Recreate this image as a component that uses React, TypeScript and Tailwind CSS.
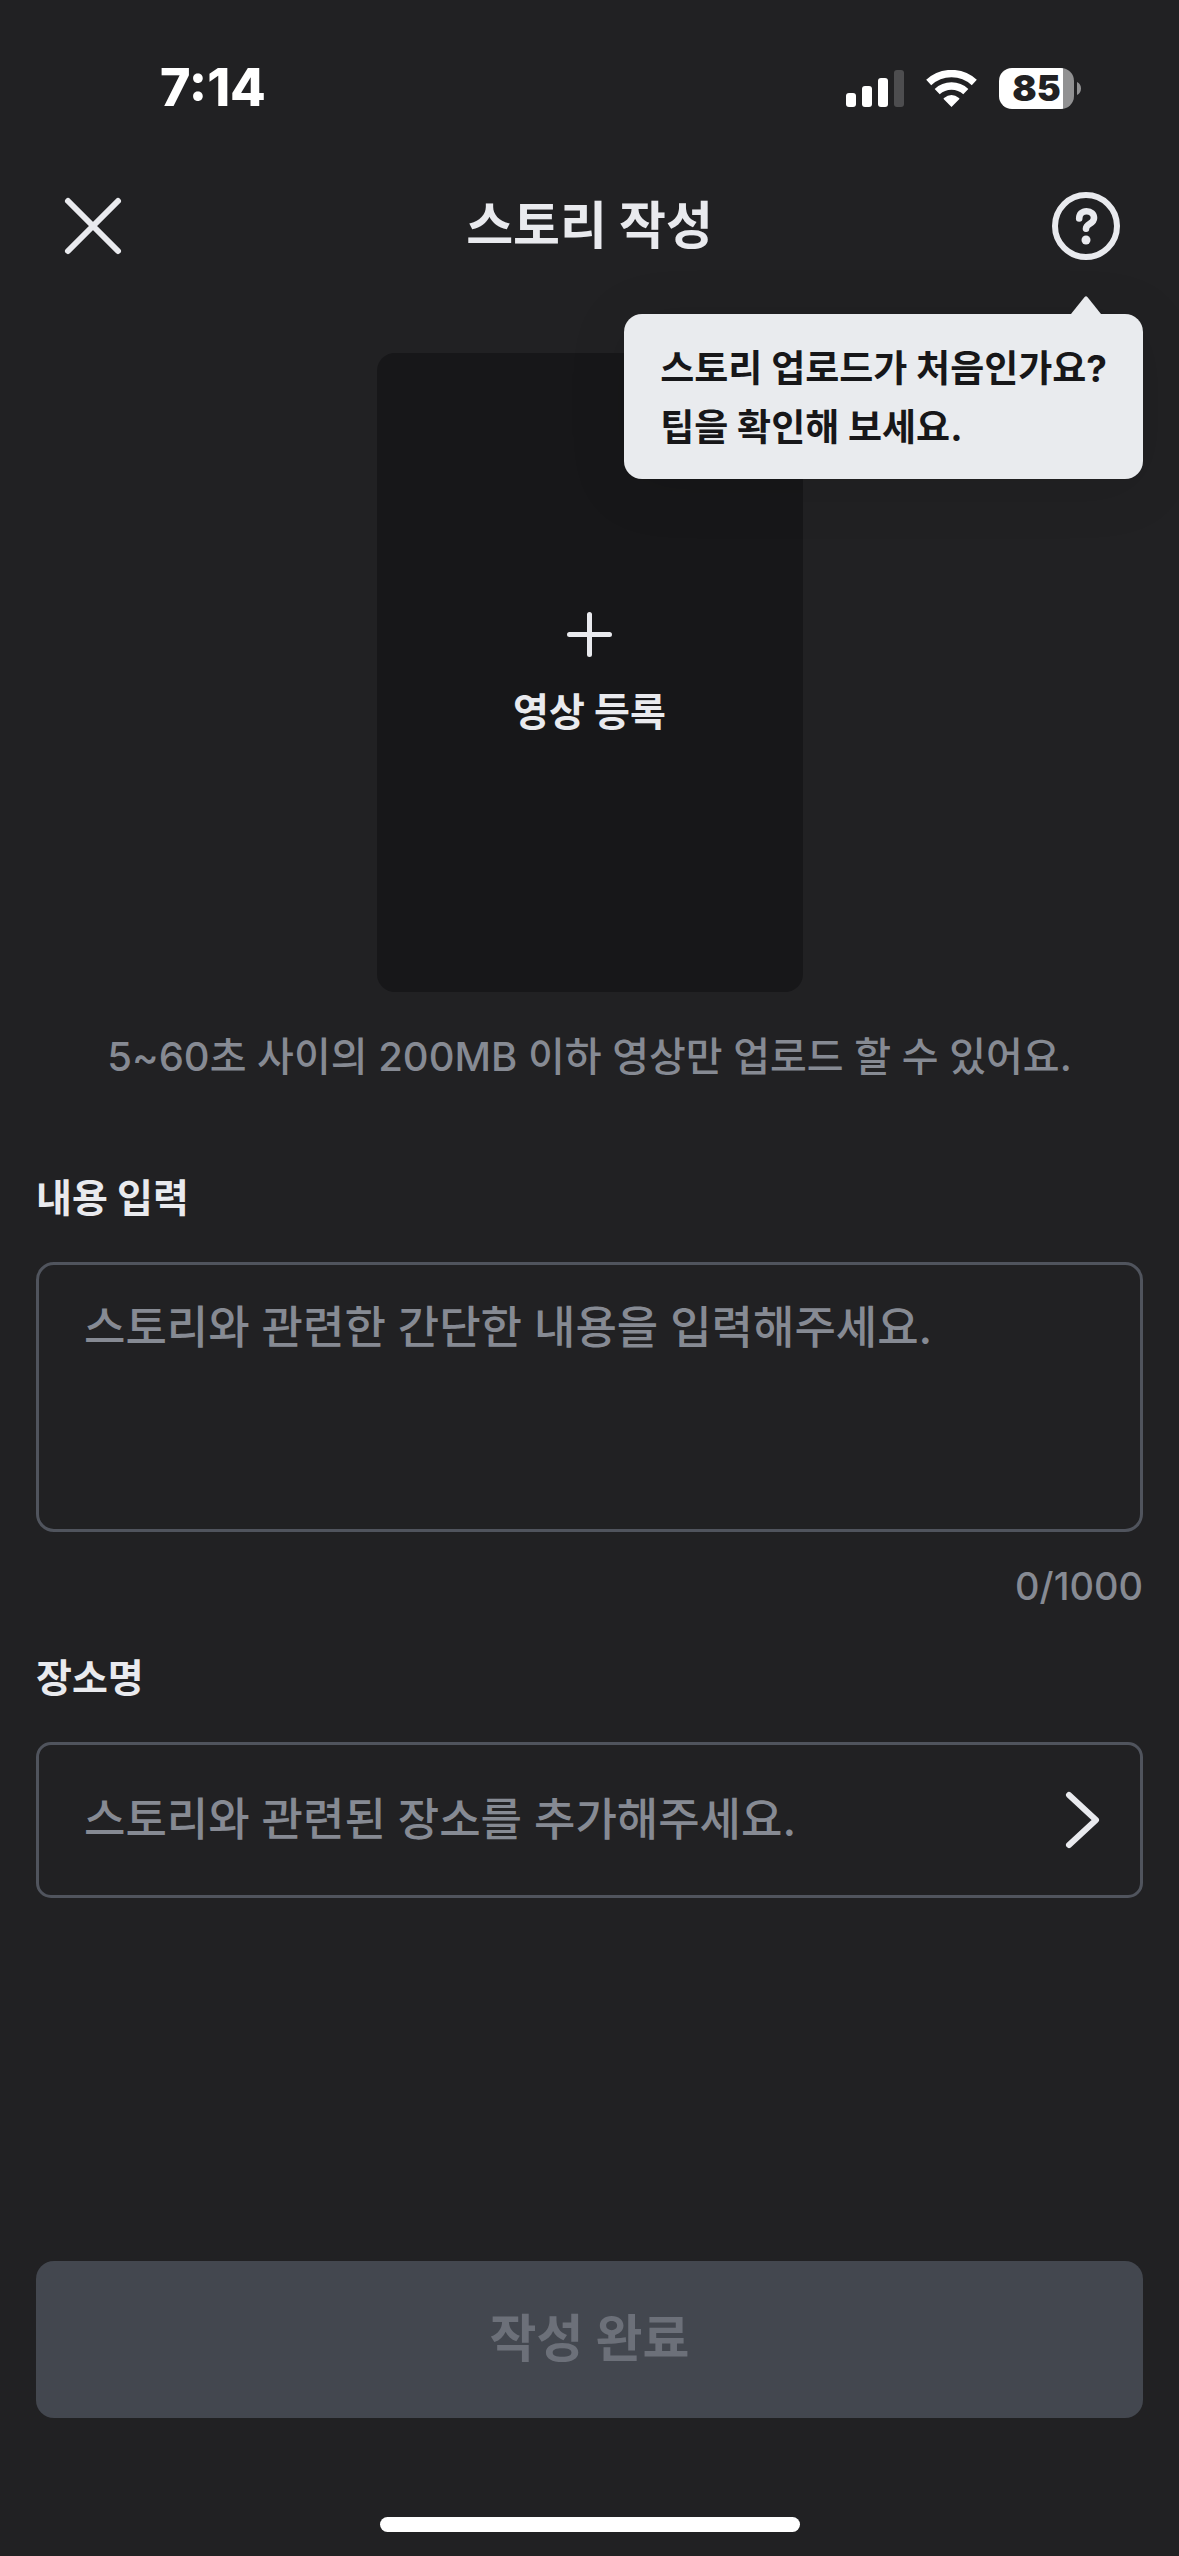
import React, { useState } from 'react';

const MAX_LENGTH = 1000;

const StatusBar: React.FC = () => (
  <div className="flex h-44 items-center justify-between pl-40 pr-[98px] text-white">
    <span className="text-[52px] font-extrabold leading-[60px]">7:14</span>
    <div className="flex items-center gap-[22px]">
      {/* Signal */}
      <svg width="58" height="37" viewBox="0 0 58 37" fill="currentColor" aria-hidden="true">
        <rect x="0" y="23" width="10" height="14" rx="3" />
        <rect x="16" y="16" width="10" height="21" rx="3" />
        <rect x="32" y="8" width="10" height="29" rx="3" />
        <rect x="48" y="0" width="10" height="37" rx="3" opacity="0.2" />
      </svg>
      {/* Wi-Fi */}
      <svg width="51" height="37" viewBox="0 0 51 37" fill="none" stroke="currentColor" strokeWidth="7.4" aria-hidden="true">
        <path d="M2.7 12.5A33.5 33.5 0 0 1 48.3 12.5" />
        <path d="M11.2 21.6A21 21 0 0 1 39.8 21.6" />
        <path d="M25.5 37L17.6 29Q17.4 28.3 18 27.9Q25.5 22 33 27.9Q33.6 28.3 33.4 29Z" fill="currentColor" stroke="none" />
      </svg>
      {/* Battery */}
      <div className="flex items-center gap-[3px]">
        <div className="flex h-[41px] w-[75px] items-center justify-center rounded-[13px] bg-[linear-gradient(to_right,#fff_64px,#919192_64px)] text-[36px] font-black leading-10 text-[#212123]">
          85
        </div>
        <svg width="4" height="13" viewBox="0 0 4 13" fill="#919192" aria-hidden="true">
          <path d="M0 0C2.4 1 4 3.5 4 6.5S2.4 12 0 13Z" />
        </svg>
      </div>
    </div>
  </div>
);

const App: React.FC = () => {
  const [content, setContent] = useState('');

  return (
    <div className="flex min-h-screen flex-col bg-[#212123] font-['Inter','Noto_Sans_CJK_KR',sans-serif] text-[#e9eaee]">
      <StatusBar />

      {/* Header */}
      <header className="relative flex h-[100px] items-center justify-between px-[59px]">
        <button type="button" aria-label="닫기">
          <svg width="68" height="68" viewBox="0 0 68 68" fill="none" stroke="currentColor" strokeWidth="6" strokeLinecap="round">
            <path d="M9 9L59 59M59 9L9 59" />
          </svg>
        </button>
        <h1 className="text-[51px] font-bold leading-[60px]">스토리 작성</h1>
        <button type="button" aria-label="도움말" aria-describedby="upload-tip">
          <svg width="68" height="68" viewBox="0 0 68 68" fill="none" stroke="currentColor" strokeWidth="6" strokeLinecap="round" strokeLinejoin="round">
            <circle cx="34" cy="34" r="31" />
            <path d="M27.2 26.5C27.2 22 30.2 19.2 34.6 19.2C39 19.2 42 22 42 26C42 32 34.2 31.5 34 36.6" strokeWidth="6.6" />
            <circle cx="34" cy="48" r="4.5" fill="currentColor" stroke="none" />
          </svg>
        </button>

        {/* Tooltip */}
        <div
          id="upload-tip"
          role="tooltip"
          className="absolute right-9 top-full z-10 mt-[38px] rounded-[18px] bg-[#e9ebee] pb-[22px] pl-9 pr-9 pt-[25px] text-[37px] font-bold leading-[59px] text-[#171719] shadow-[0_8px_60px_rgba(0,0,0,0.1)]"
        >
          <svg className="absolute bottom-full right-[42px]" width="30" height="18" viewBox="0 0 30 18" fill="#e9ebee" aria-hidden="true">
            <path d="M0 18L13.6 1Q15 -0.6 16.4 1L30 18Z" />
          </svg>
          스토리 업로드가 처음인가요?
          <br />
          팁을 확인해 보세요.
        </div>
      </header>

      <main className="flex flex-col px-9 pt-[77px]">
        {/* Video upload */}
        <button
          type="button"
          className="flex h-[639px] w-[426px] flex-col items-center justify-center gap-[26px] self-center rounded-[18px] bg-[#171719] pt-2 text-[39px] font-bold leading-[58px]"
        >
          <svg width="45" height="45" viewBox="0 0 45 45" fill="none" stroke="currentColor" strokeWidth="5" strokeLinecap="round" aria-hidden="true">
            <path d="M22.5 2.5V42.5M2.5 22.5H42.5" />
          </svg>
          영상 등록
        </button>
        <p className="mt-9 text-center text-[40px] font-medium leading-[58px] text-[#868a93]">
          5~60초 사이의 200MB 이하 영상만 업로드 할 수 있어요.
        </p>

        {/* Content */}
        <label htmlFor="content" className="mt-[83px] text-[39px] font-bold leading-[58px]">
          내용 입력
        </label>
        <textarea
          id="content"
          value={content}
          maxLength={MAX_LENGTH}
          onChange={(e) => setContent(e.target.value)}
          placeholder="스토리와 관련한 간단한 내용을 입력해주세요."
          className="mt-[35px] h-[270px] resize-none rounded-[18px] border-3 border-[#50545d] bg-transparent px-[45px] py-[30px] text-[45px] font-medium leading-[66px] outline-none placeholder:text-[#868a93]"
        />
        <p className="mt-7 text-right text-[38px] font-medium leading-[52px] text-[#868a93]">
          {content.length}/{MAX_LENGTH}
        </p>

        {/* Place */}
        <label htmlFor="place" className="mt-[37px] text-[39px] font-bold leading-[58px]">
          장소명
        </label>
        <button
          id="place"
          type="button"
          className="mt-[35px] flex h-[156px] items-center justify-between rounded-[15px] border-3 border-[#50545d] pl-[45px] pr-10 text-[45px] font-medium leading-[66px] text-[#868a93]"
        >
          스토리와 관련된 장소를 추가해주세요.
          <svg width="35" height="58" viewBox="0 0 35 58" fill="none" stroke="#e9eaee" strokeWidth="6" strokeLinecap="round" strokeLinejoin="round" aria-hidden="true">
            <path d="M4 4L31 29L4 54" />
          </svg>
        </button>
      </main>

      {/* Footer */}
      <footer className="mt-auto flex flex-col px-9 pb-6 pt-9">
        <button type="button" disabled className="h-[157px] rounded-[18px] bg-[#43474f] text-[51px] font-bold text-[#6c7079]">
          작성 완료
        </button>
        <div className="mt-[99px] h-[15px] w-[420px] self-center rounded-full bg-white" />
      </footer>
    </div>
  );
};

export default App;
